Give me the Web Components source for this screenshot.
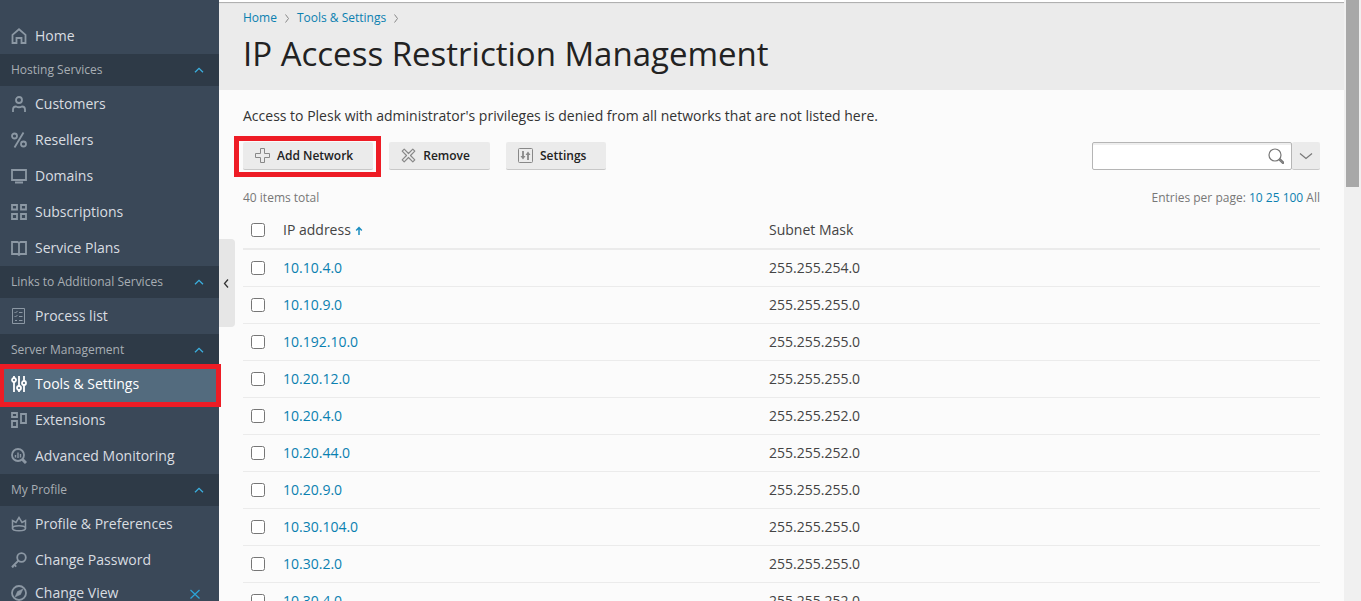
<!DOCTYPE html>
<html lang="en">
<head>
<meta charset="utf-8">
<meta name="viewport" content="width=device-width, initial-scale=1">
<title>IP Access Restriction Management</title>
<style>
  html, body { margin: 0; height: 100%; overflow: hidden; }
  body { font: 14px/20px "Open Sans", "Noto Sans", sans-serif; color: #444; background: #fbfbfb; }
</style>
</head>
<body>
<admin-app>
  <side-nav slot="nav">
    <nav-item icon="home">Home</nav-item>
    <nav-section heading="Hosting Services">
      <nav-item icon="user">Customers</nav-item>
      <nav-item icon="percent">Resellers</nav-item>
      <nav-item icon="monitor">Domains</nav-item>
      <nav-item icon="grid">Subscriptions</nav-item>
      <nav-item icon="book">Service Plans</nav-item>
    </nav-section>
    <nav-section heading="Links to Additional Services">
      <nav-item icon="list">Process list</nav-item>
    </nav-section>
    <nav-section heading="Server Management">
      <nav-item icon="sliders" current>Tools &amp; Settings</nav-item>
      <nav-item icon="extensions">Extensions</nav-item>
      <nav-item icon="monitoring">Advanced Monitoring</nav-item>
    </nav-section>
    <nav-section heading="My Profile">
      <nav-item icon="crown">Profile &amp; Preferences</nav-item>
      <nav-item icon="key">Change Password</nav-item>
      <nav-item icon="compass" compact closable>Change View</nav-item>
    </nav-section>
  </side-nav>
  <page-header slot="header" heading="IP Access Restriction Management">
    <crumb-link>Home</crumb-link>
    <crumb-link>Tools &amp; Settings</crumb-link>
  </page-header>
  <access-list>
    <span slot="intro">Access to Plesk with administrator's privileges is denied from all networks that are not listed here.</span>
    <tool-button slot="tools" icon="plus" marked>Add Network</tool-button>
    <tool-button slot="tools" icon="cross">Remove</tool-button>
    <tool-button slot="tools" icon="settings">Settings</tool-button>
    <search-box slot="search"></search-box>
  </access-list>
</admin-app>

<script>
const ICONS = {
  home: '<path d="M1.500 15V6.800L8 1.200l6.500 5.600V15h-4V10h-5v5z"/>',
  user: '<circle cx="8" cy="4" r="3"/><path d="M2 16v-2.500Q2 10.500 5 10.500q3 1.500 6 0 3 0 3 3V16"/>',
  percent: '<circle cx="3.500" cy="4" r="2.500"/><circle cx="12.500" cy="12" r="2.500"/><path d="M12.500 .5 3.500 15.500"/>',
  monitor: '<path d="M1 2h14v10H1zM4 14.500h8"/>',
  grid: '<path d="M1 1h5v4.500H1zM10 1h5v4.500h-5zM1 10h5v5H1zM10 10h5v5h-5z"/>',
  book: '<path d="M1 2h5.500L8 3l1.500-1H15v12H9.500L8 15l-1.500-1H1zM8 3v12"/>',
  list: '<g stroke-width="1"><path d="M1.500.5h12v15h-12zM3.500 4l1 1 2-2M3.500 8l1 1 2-2M4 12.500h2M8 4.500h3.500M8 8.500h3.500M8 12.500h3.500"/></g>',
  sliders: '<path d="M3 0v2M3 6v10M8 0v10M8 14v2M13 0v5M13 9v7"/><circle cx="3" cy="4" r="2"/><circle cx="8" cy="12" r="2"/><circle cx="13" cy="7" r="2"/>',
  extensions: '<path d="M1 1h5v4H1zM1 9h5v6H1zM10 2h5v9h-5z"/>',
  monitoring: '<circle cx="7" cy="7" r="6"/><path stroke-width="1.400" d="M4.500 7v2.500M7 4.500v5.500M9.500 6v3.500"/><path stroke-width="3" d="m11.500 11.500 3.500 3.500"/>',
  crown: '<g stroke-width="1.500"><path d="M1.500 12.500V4.500L5 6.500 8 1.500l3 5 3.500-2v8"/><ellipse cx="8" cy="12.300" rx="6.500" ry="2.500"/></g>',
  key: '<circle cx="10.500" cy="5.500" r="4.300"/><path d="M7.500 8.500 1 15M3 12.500l2.200 2.200M1 14l1.500 1.500"/>',
  compass: '<circle cx="8" cy="8" r="7"/><path fill="currentColor" stroke-width=".5" d="M12 4 6.500 6.500 4 12l5.500-2.500z"/>',
  plus: '<path stroke-width="1" d="M5.500 .5h4v5h5v4h-5v5h-4v-5h-5v-4h5z"/>',
  cross: '<path stroke-width="1.200" stroke-linejoin="round" d="M1.200 3.200 3.200 1.200 7.500 5.500l4.300-4.300 2 2-4.300 4.300 4.300 4.300-2 2-4.300-4.300-4.300 4.300-2-2 4.300-4.300z"/>',
  settings: '<rect x=".5" y=".5" width="14" height="14" rx="1" stroke-width="1"/><path d="M5 3v7M10 12V5" stroke-width="1.800"/><path d="M2.500 8h5L5 11.500zM7.500 7h5L10 3.500z" fill="currentColor" stroke="none"/>',
  search: '<circle cx="7" cy="7" r="6" stroke-width="1.200"/><path d="m11 11.800 4 3.900 1-1-4-3.900" stroke-width="1.200"/>',
  up: '<path stroke-width="1.300" d="m4 10.300 4-4 4 4"/>',
  down: '<path stroke-width="1.200" d="m2 5.500 6 5 6-5"/>',
  left: '<path d="m9 4.500-3.500 4 3.500 4" stroke-width="1.300"/>',
  right: '<path stroke-width="1" d="m6.500 4.500 3 4-3 4"/>',
  close: '<path stroke-width="1.200" d="m3.500 4 9 8.500M12.500 4l-9 8.500"/>',
  sort: '<path d="M4 13V6M1.200 8.500 4 5.500l2.800 3" stroke-width="1.500"/>'
};
const icon = (name, w = 16) =>
  `<svg width="${w}" height="16" viewBox="0 0 ${w} 16" fill="none" stroke="currentColor" stroke-width="1.800" aria-hidden="true">${ICONS[name]}</svg>`;

class Base extends HTMLElement {
  connectedCallback() {
    if (this.shadowRoot) return;
    this.attachShadow({ mode: 'open' }).innerHTML =
      `<style>*{box-sizing:border-box} svg{display:block;flex:none} a{text-decoration:none}</style>` + this.render();
  }
}

customElements.define('nav-item', class extends Base {
  render() {
    return `<style>
      :host { display: block; position: relative; }
      a { display: flex; align-items: center; gap: 8px; height: 36px; padding: 0 16px 0 11px; color: #d9dde1; font-weight: 500; }
      a svg { color: #8c98a4; }
      :host([compact]) a { height: 30px; }
      :host([current]) a { background: #536b7e; color: #fff; }
      :host([current]) a svg { color: #fff; }
      .grow { flex: 1; white-space: nowrap; }
      button { display: flex; padding: 0; border: 0; background: none; }
      button svg { color: #2ba5d8; }
      .close { position: absolute; right: 16px; top: 8px; }
      .mark { position: absolute; inset: -2px -2px -5px -1px; border: 5px solid #ee1c25; z-index: 2; pointer-events: none; }
    </style>
    <a href="#">${icon(this.getAttribute('icon'))}<span class="grow"><slot></slot></span></a>
    ${this.hasAttribute('closable') ? `<button class="close" type="button" aria-label="Close">${icon('close')}</button>` : ''}
    ${this.hasAttribute('current') ? '<div class="mark"></div>' : ''}`;
  }
});

customElements.define('nav-section', class extends Base {
  render() {
    return `<style>
      :host { display: block; }
      button { display: flex; align-items: center; justify-content: space-between; width: 100%; height: 32px;
        padding: 0 12px 0 11px; border: 0; background: #2e3a47; color: #a8aeb4; font: 12px/20px "Open Sans", sans-serif; white-space: nowrap; }
      svg { color: #3bb0e0; }
    </style>
    <button type="button" aria-expanded="true">${this.getAttribute('heading')}${icon('up')}</button>
    <slot></slot>`;
  }
});

customElements.define('side-nav', class extends Base {
  render() {
    return `<style>
      :host { display: block; position: relative; z-index: 1; padding-top: 18px; background: #3a4858; }
      .toggle { position: absolute; left: 100%; top: 239px; width: 16px; height: 88px; padding: 0; border: 0;
        border-radius: 0 4px 4px 0; background: #e6e6e6; color: #333; display: flex; align-items: center; justify-content: center; }
    </style>
    <nav><slot></slot></nav>
    <button class="toggle" type="button" aria-label="Collapse menu">${icon('left')}</button>`;
  }
});

customElements.define('crumb-link', class extends Base {
  render() {
    return `<style>
      :host { display: flex; align-items: center; gap: 2px; font-size: 12px; }
      a { color: #0a80b0; } svg { color: #888; }
    </style><a href="#"><slot></slot></a>${icon('right')}`;
  }
});

customElements.define('page-header', class extends Base {
  render() {
    return `<style>
      :host { display: block; height: 90px; border-top: 2px solid #fff; background: #ebebeb; box-shadow: inset 0 2px 1px -1px #aaa; padding: 6px 24px 0; box-sizing: border-box; }
      nav { display: flex; gap: 2px; height: 20px; }
      h1 { margin: 4px 0 0; font-size: 33px; line-height: 44px; font-weight: 500; color: #222; white-space: nowrap; }
    </style>
    <nav aria-label="Breadcrumb"><slot></slot></nav><h1>${this.getAttribute('heading')}</h1>`;
  }
});

customElements.define('tool-button', class extends Base {
  render() {
    return `<style>
      :host { display: block; position: relative; }
      button { display: flex; align-items: center; gap: 6px; height: 28px; padding: 0 20px 0 12px; border: 0; border-bottom: 1px solid #c8c8c8;
        border-radius: 2px; background: #ebebeb; color: #222; font: 600 12px/20px "Open Sans", sans-serif; white-space: nowrap; }
      svg { color: #888; }
      .mark { position: absolute; inset: -6px -8px -7px -9px; border: 5px solid #ee1c25; pointer-events: none; }
    </style>
    <button type="button">${icon(this.getAttribute('icon'))}<slot></slot></button>
    ${this.hasAttribute('marked') ? '<div class="mark"></div>' : ''}`;
  }
});

customElements.define('search-box', class extends Base {
  render() {
    return `<style>
      :host, form { display: flex; }
      .field { display: flex; align-items: center; width: 200px; height: 28px; border: 1px solid #b5b5b5; border-radius: 2px;
        background: #fff; box-shadow: inset 0 2px 0 #eee; padding-right: 7px; }
      input { flex: 1; min-width: 0; border: 0; outline: 0; background: none; font: inherit; padding: 0 8px; }
      button { display: flex; align-items: center; justify-content: center; border: 0; padding: 0; background: none; color: #777; }
      .more { width: 28px; height: 28px; background: #ebebeb; border-bottom: 1px solid #c8c8c8; border-radius: 2px; }
    </style>
    <form role="search"><div class="field"><input type="text" aria-label="Search"><button type="button" aria-label="Find">${icon('search')}</button></div>
    <button class="more" type="button" aria-label="Search options">${icon('down')}</button></form>`;
  }
});

const NETWORKS = [
  ['10.10.4.0', '255.255.254.0'], ['10.10.9.0', '255.255.255.0'], ['10.192.10.0', '255.255.255.0'],
  ['10.20.12.0', '255.255.255.0'], ['10.20.4.0', '255.255.252.0'], ['10.20.44.0', '255.255.252.0'],
  ['10.20.9.0', '255.255.255.0'], ['10.30.104.0', '255.255.255.0'], ['10.30.2.0', '255.255.255.0'],
  ['10.30.4.0', '255.255.252.0']
];

customElements.define('access-list', class extends Base {
  render() {
    return `<style>
      :host { display: block; padding: 16px 24px 0; }
      p { margin: 0 0 16px; color: #333; }
      .bar, .tools, .info { display: flex; }
      .bar { justify-content: space-between; }
      .tools { gap: 16px; }
      .info { justify-content: space-between; margin-top: 18px; font-size: 12px; color: #777; }
      a { color: #0a80b0; }
      table { width: 100%; border-collapse: separate; border-spacing: 0; table-layout: fixed; margin-top: 3px; }
      th, td { padding: 0; text-align: left; font-weight: 400; color: #444; vertical-align: middle; }
      th { height: 39px; border-bottom: 2px solid #ebebeb; }
      td { height: 37px; border-bottom: 1px solid #ebebeb; }
      .check { width: 40px; } .ip { width: 486px; }
      .sort { display: flex; align-items: center; gap: 4px; }
      .sort svg { color: #1a8dc0; }
      input { display: block; width: 14px; height: 14px; margin: 0 0 0 8px; }
    </style>
    <p><slot name="intro"></slot></p>
    <div class="bar"><div class="tools"><slot name="tools"></slot></div><slot name="search"></slot></div>
    <div class="info"><span>40 items total</span><span>Entries per page: <a href="#">10</a> <a href="#">25</a> <a href="#">100</a> All</span></div>
    <table>
      <thead><tr><th class="check"><input type="checkbox" aria-label="Select all"></th>
        <th class="ip"><span class="sort">IP address ${icon('sort', 8)}</span></th><th>Subnet Mask</th></tr></thead>
      <tbody>${NETWORKS.map(([ip, mask]) =>
        `<tr><td><input type="checkbox" aria-label="Select ${ip}"></td><td><a href="#">${ip}</a></td><td>${mask}</td></tr>`).join('')}</tbody>
    </table>`;
  }
});

customElements.define('scroll-rail', class extends Base {
  render() {
    return `<style>
      :host { display: flex; flex-direction: column; justify-content: space-between; align-items: center; background: #f0f0f0; }
      .thumb { width: 13px; height: 187px; background: #a8a8a8; }
      .end { width: 7px; height: 1px; background: #505050; }
    </style><div class="thumb"></div><div class="end"></div>`;
  }
});

customElements.define('admin-app', class extends Base {
  render() {
    return `<style>
      :host { display: grid; grid-template-columns: 219px minmax(0, 1fr) 17px; height: 100vh; overflow: hidden; }
      main { min-width: 0; }
    </style>
    <slot name="nav"></slot>
    <main><slot name="header"></slot><slot></slot></main>
    <scroll-rail></scroll-rail>`;
  }
});
</script>
</body>
</html>
